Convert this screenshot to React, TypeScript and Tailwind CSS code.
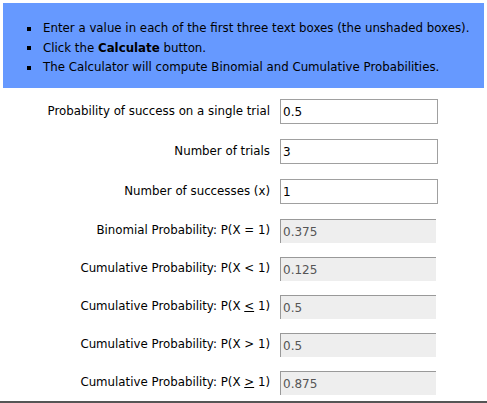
import React from 'react';

const inputs = [
  { label: 'Probability of success on a single trial', value: '0.5' },
  { label: 'Number of trials', value: '3' },
  { label: 'Number of successes (x)', value: '1' },
];

const outputs: { label: React.ReactNode; value: string }[] = [
  { label: 'Binomial Probability: P(X = 1)', value: '0.375' },
  { label: 'Cumulative Probability: P(X < 1)', value: '0.125' },
  { label: <>Cumulative Probability: P(X <u>&lt;</u> 1)</>, value: '0.5' },
  { label: 'Cumulative Probability: P(X > 1)', value: '0.5' },
  { label: <>Cumulative Probability: P(X <u>&gt;</u> 1)</>, value: '0.875' },
];

const App: React.FC = () => {
  return (
    <div className="w-[487px] h-[403px] bg-white text-black text-[11.8px] font-['DejaVu_Sans',sans-serif] overflow-hidden">
      <div className="h-[403px] border-b-2 border-[#555] pt-[3px] px-[3px]">
        <div className="bg-[#6699ff] h-[85px] pt-[16px] pl-[24px]">
          <ul className="leading-[19.5px]">
            <li className="flex items-center">
              <span className="w-[4px] h-[4px] bg-black mr-[12px]"></span>
              Enter a value in each of the first three text boxes (the unshaded boxes).
            </li>
            <li className="flex items-center">
              <span className="w-[4px] h-[4px] bg-black mr-[12px]"></span>
              <span>Click the <b>Calculate</b> button.</span>
            </li>
            <li className="flex items-center">
              <span className="w-[4px] h-[4px] bg-black mr-[12px]"></span>
              The Calculator will compute Binomial and Cumulative Probabilities.
            </li>
          </ul>
        </div>

        <div className="mt-[11px] flex flex-col gap-[15px]">
          {inputs.map(r => (
            <div key={r.value + r.label} className="flex items-center">
              <label className="w-[270px] text-right pr-[3px]">{r.label}</label>
              <input
                type="text"
                defaultValue={r.value}
                className="ml-[7px] w-[158px] h-[25px] border border-[#a0a0a0] bg-white px-[2px] text-[12px] text-black outline-none"
              />
            </div>
          ))}
        </div>

        <div className="mt-[15px] flex flex-col gap-[14px]">
          {outputs.map((r, i) => (
            <div key={i} className="flex items-center">
              <label className="w-[270px] text-right pr-[3px]">{r.label}</label>
              <input
                type="text"
                readOnly
                value={r.value}
                className="ml-[7px] w-[156px] h-[24px] border-t border-l border-t-[#999] border-l-[#999] bg-[#eeeeee] px-[2px] text-[12px] text-[#555] outline-none"
              />
            </div>
          ))}
        </div>
      </div>
    </div>
  );
};

export default App;
